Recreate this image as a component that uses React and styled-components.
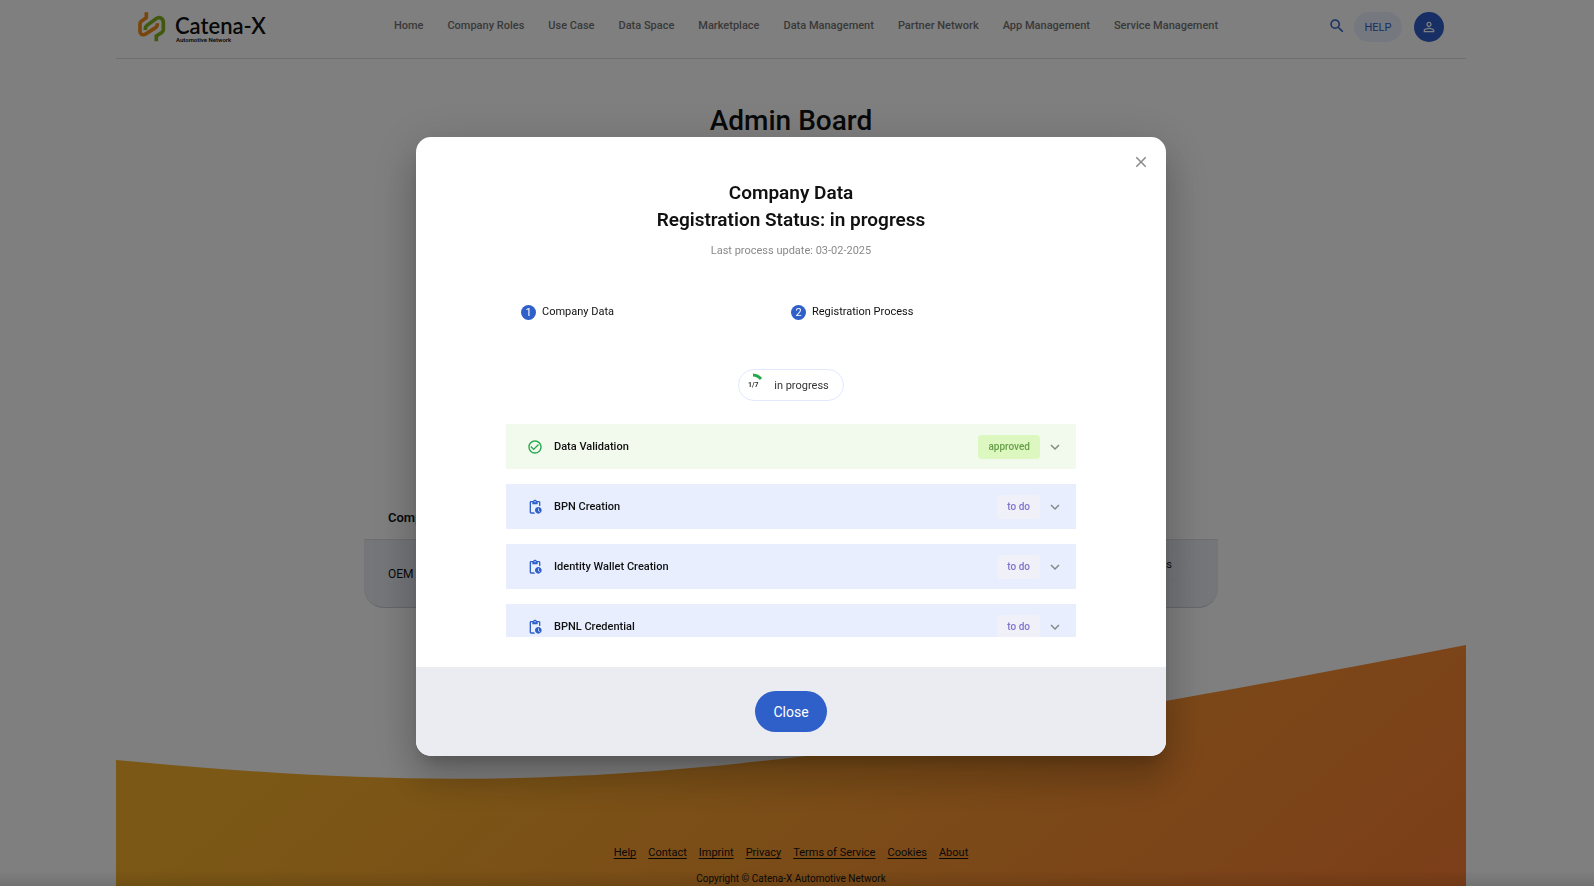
import React from "react";
import styled, { createGlobalStyle } from "styled-components";
import {
  MdSearch,
  MdPersonOutline,
  MdClose,
  MdExpandMore,
  MdCheckCircleOutline,
  MdPendingActions,
} from "react-icons/md";

const GlobalStyle = createGlobalStyle`
  *, *::before, *::after { box-sizing: border-box; }
  html, body { margin: 0; }
  body {
    height: 100vh;
    overflow: hidden;
    background: #fff;
    color: #111;
    font-family: Roboto, "Liberation Sans", sans-serif;
    font-size: 11px;
  }
  button { font-family: inherit; cursor: pointer; }
`;

const Page = styled.div`
  display: flex;
  flex-direction: column;
  width: calc(100% - 12px);
  min-height: 100vh;
  padding: 0 116px;
`;

const Header = styled.header`
  display: flex;
  justify-content: space-between;
  align-items: flex-start;
  height: 59px;
  padding: 12px 22px 0;
  border-bottom: 1px solid #dcdcdc;
`;

const Logo = styled.a`
  display: flex;
  gap: 9px;
  width: 146px;
  color: #111;
  text-decoration: none;
`;

const LogoText = styled.span`
  display: flex;
  flex-direction: column;
  padding-top: 4px;
`;

const LogoName = styled.span`
  font-family: Lato, sans-serif;
  font-size: 22px;
  font-weight: 600;
  line-height: 20px;
`;

const LogoTagline = styled.span`
  padding-left: 1px;
  font-size: 6px;
  font-weight: 600;
  line-height: 8px;
`;

const Nav = styled.nav`
  display: flex;
  gap: 24px;
  padding-left: 30px;
`;

const NavLink = styled.a`
  color: #737373;
  font-weight: 500;
  line-height: 28px;
  text-decoration: none;
  white-space: nowrap;
`;

const Tools = styled.div`
  display: flex;
  align-items: center;
  justify-content: flex-end;
  width: 146px;
`;

const SearchButton = styled.button`
  display: flex;
  padding: 0;
  margin: 0 8px 2px 0;
  border: 0;
  background: none;
  color: #2f5fc9;
  font-size: 18px;
`;

const HelpButton = styled.button`
  width: 48px;
  height: 30px;
  padding: 0;
  margin-right: 12px;
  border: 0;
  border-radius: 15px;
  background: #eaf1fe;
  color: #2f5fc9;
  font-size: 11px;
`;

const UserButton = styled.button`
  display: grid;
  place-items: center;
  width: 30px;
  height: 30px;
  padding: 0;
  border: 0;
  border-radius: 50%;
  background: #2f5fc9;
  color: #fff;
  font-size: 16px;
`;

const PageTitle = styled.h1`
  margin: 43px 0 0;
  font-size: 28px;
  font-weight: 500;
  line-height: 38px;
  text-align: center;
`;

const CompanyTable = styled.table`
  width: 854px;
  max-width: 100%;
  margin: 357px auto 0;
  border-spacing: 0;
  font-size: 12px;
`;

const HeadCell = styled.th`
  height: 43px;
  padding: 0 24px 2px;
  border-bottom: 1px solid #dcdcdc;
  font-size: 13px;
  font-weight: 600;
  text-align: left;
`;

const Cell = styled.td`
  height: 68px;
  padding: 0 24px;
  border-bottom: 1px solid #c8cdd8;
  background: #eaecf4;
  &:first-child { border-bottom-left-radius: 20px; }
  &:last-child { width: 220px; padding: 0 31px 18px 0; border-bottom-right-radius: 20px; text-align: right; }
`;

const StatusTag = styled.span`
  display: inline-flex;
  align-items: center;
  height: 32px;
  padding: 0 14px;
  border: 1px solid #e6ebf8;
  border-radius: 16px;
  font-size: 11px;
`;

const Footer = styled.footer`
  position: relative;
  display: flex;
  flex-direction: column;
  justify-content: flex-end;
  align-items: center;
  flex: 0 0 241px;
  margin-top: 37px;
`;

const Wave = styled.svg`
  position: absolute;
  inset: 0;
  width: 100%;
  height: 100%;
`;

const FooterLinks = styled.nav`
  position: relative;
  display: flex;
  gap: 12px;
`;

const FooterLink = styled.a`
  color: #111;
  line-height: 20px;
  text-underline-offset: 2px;
`;

const Copyright = styled.p`
  position: relative;
  margin: 8px 0 0;
  font-size: 10px;
  line-height: 15px;
`;

const Backdrop = styled.div`
  position: fixed;
  inset: 0;
  display: flex;
  justify-content: center;
  align-items: center;
  padding: 7px 12px 0 0;
  background:
    linear-gradient(to top, rgba(0, 0, 0, 0.1), transparent 16px),
    rgba(0, 0, 0, 0.5);
`;

const Dialog = styled.section`
  position: relative;
  display: flex;
  flex-direction: column;
  width: 750px;
  max-width: 100%;
  overflow: hidden;
  border-radius: 15px;
  background: #fff;
  box-shadow:
    0 11px 15px -7px rgba(0, 0, 0, 0.2),
    0 24px 38px 3px rgba(0, 0, 0, 0.14),
    0 9px 46px 8px rgba(0, 0, 0, 0.12);
`;

const CloseIcon = styled.button`
  position: absolute;
  top: 16px;
  right: 16px;
  display: flex;
  padding: 0;
  border: 0;
  background: none;
  color: #8a8a8a;
  font-size: 18px;
`;

const DialogHead = styled.header`
  padding: 42px 90px 0;
  text-align: center;
`;

const DialogTitle = styled.h2`
  margin: 0;
  font-size: 19px;
  font-weight: 600;
  line-height: 27px;
`;

const DialogNote = styled.p`
  margin: 8px 0 0;
  color: #8a8a8a;
  line-height: 20px;
`;

const DialogBody = styled.div`
  max-height: 376px;
  padding: 0 90px;
  margin-bottom: 30px;
  overflow: hidden;
`;

const Steps = styled.ol`
  display: grid;
  grid-template-columns: 1fr 1fr;
  padding: 0 15px;
  margin: 42px 0 48px;
  list-style: none;
`;

const Step = styled.li`
  display: flex;
  align-items: center;
  gap: 6px;
  height: 18px;
`;

const StepNumber = styled.span`
  display: grid;
  place-items: center;
  width: 15px;
  height: 15px;
  border-radius: 50%;
  background: #2f5fc9;
  color: #fff;
`;

const StepName = styled.span`
  padding-bottom: 2px;
`;

const Progress = styled.div`
  display: flex;
  align-items: center;
  gap: 11px;
  width: max-content;
  height: 32px;
  padding: 0 14px 0 4px;
  margin: 0 auto 23px;
  border: 1px solid #e2e9ff;
  border-radius: 16px;
  color: #333;
  line-height: 15px;
`;

const Dial = styled.span`
  position: relative;
  display: grid;
  place-items: center;
  width: 20px;
  height: 20px;
  font-size: 7px;
  font-weight: 700;
`;

const DialArc = styled.svg`
  position: absolute;
  inset: 0;
  overflow: visible;
`;

const Checklist = styled.ul`
  display: flex;
  flex-direction: column;
  gap: 15px;
  padding: 0;
  margin: 0;
  list-style: none;
`;

const CheckItem = styled.li`
  display: flex;
  align-items: center;
  height: 45px;
  padding: 0 12px 0 21px;
  background: ${({ $done }) => ($done ? "#f2f9ed" : "#e8eefe")};
`;

const ItemIcon = styled.span`
  display: flex;
  color: ${({ $done }) => ($done ? "#23a84c" : "#2f5fc9")};
  font-size: 16px;
`;

const ItemName = styled.span`
  flex: 1;
  padding-left: 11px;
  font-weight: 500;
`;

const Badge = styled.span`
  padding: 0 10px;
  border-radius: 4px;
  background: ${({ $done }) => ($done ? "#ddf7c0" : "#f0f0f9")};
  color: ${({ $done }) => ($done ? "#679f48" : "#8073cc")};
  font-size: 10px;
  font-weight: 500;
  line-height: 24px;
`;

const Expand = styled.button`
  display: flex;
  padding: 0;
  margin-left: 6px;
  border: 0;
  background: none;
  color: #888;
  font-size: 18px;
`;

const DialogFoot = styled.footer`
  display: flex;
  justify-content: center;
  align-items: center;
  height: 89px;
  background: #ebecf2;
`;

const CloseButton = styled.button`
  height: 41px;
  padding: 0 18px;
  border: 0;
  border-radius: 21px;
  background: #2f5fc9;
  color: #fff;
  font-size: 14px;
`;

const NAV = [
  "Home",
  "Company Roles",
  "Use Case",
  "Data Space",
  "Marketplace",
  "Data Management",
  "Partner Network",
  "App Management",
  "Service Management",
];

const FOOTER = ["Help", "Contact", "Imprint", "Privacy", "Terms of Service", "Cookies", "About"];

const CHECKS = [
  { name: "Data Validation", done: true },
  { name: "BPN Creation" },
  { name: "Identity Wallet Creation" },
  { name: "BPNL Credential" },
];

function LogoMark() {
  return (
    <svg width="28" height="30" viewBox="0 0 84 90" fill="none" strokeWidth="11" aria-hidden="true">
      <path d="M25 1V17L10 28Q6 31 6 36V58Q6 64 11 67Q17 70 23 66L53 47Q58 44 58 37V34" stroke="#f08c1a" />
      <path d="M22 54V49Q22 44 27 40L53 21Q61 15 68 18Q76 22 76 31V53Q76 59 71 62L55 72V88" stroke="#86b01e" />
    </svg>
  );
}

export default function App() {
  return (
    <>
      <GlobalStyle />
      <Page>
        <Header>
          <Logo href="#">
            <LogoMark />
            <LogoText>
              <LogoName>Catena-X</LogoName>
              <LogoTagline>Automotive Network</LogoTagline>
            </LogoText>
          </Logo>
          <Nav>
            {NAV.map((label) => (
              <NavLink href="#" key={label}>{label}</NavLink>
            ))}
          </Nav>
          <Tools>
            <SearchButton aria-label="Search"><MdSearch /></SearchButton>
            <HelpButton>HELP</HelpButton>
            <UserButton aria-label="Account"><MdPersonOutline /></UserButton>
          </Tools>
        </Header>

        <PageTitle>Admin Board</PageTitle>

        <CompanyTable>
          <thead>
            <tr>
              <HeadCell>Company</HeadCell>
              <HeadCell />
            </tr>
          </thead>
          <tbody>
            <tr>
              <Cell>OEM</Cell>
              <Cell><StatusTag>in progress</StatusTag></Cell>
            </tr>
          </tbody>
        </CompanyTable>

        <Footer>
          <Wave viewBox="0 0 1350 241" preserveAspectRatio="none" aria-hidden="true">
            <defs>
              <linearGradient id="amber" gradientUnits="userSpaceOnUse" x1="300" y1="0" x2="900" y2="700">
                <stop offset="0" stopColor="#f6b02c" />
                <stop offset="1" stopColor="#f97a34" />
              </linearGradient>
            </defs>
            <path d="M0 115C400 152 610 144 1350 0V241H0Z" fill="url(#amber)" />
          </Wave>
          <FooterLinks>
            {FOOTER.map((label) => (
              <FooterLink href="#" key={label}>{label}</FooterLink>
            ))}
          </FooterLinks>
          <Copyright>Copyright © Catena-X Automotive Network</Copyright>
        </Footer>
      </Page>

      <Backdrop>
        <Dialog role="dialog" aria-modal="true" aria-labelledby="dialog-title">
          <CloseIcon aria-label="Close dialog"><MdClose /></CloseIcon>
          <DialogHead>
            <DialogTitle id="dialog-title">
              Company Data
              <br />
              Registration Status: in progress
            </DialogTitle>
            <DialogNote>Last process update: 03-02-2025</DialogNote>
          </DialogHead>
          <DialogBody>
            <Steps>
              <Step>
                <StepNumber>1</StepNumber>
                <StepName>Company Data</StepName>
              </Step>
              <Step>
                <StepNumber>2</StepNumber>
                <StepName>Registration Process</StepName>
              </Step>
            </Steps>
            <Progress>
              <Dial>
                <DialArc viewBox="0 0 20 20" fill="none" aria-hidden="true">
                  <path d="M10 0A11 11 0 0 1 18 4" stroke="#23a84c" strokeWidth="3" />
                </DialArc>
                1/7
              </Dial>
              in progress
            </Progress>
            <Checklist>
              {CHECKS.map(({ name, done }) => (
                <CheckItem $done={done} key={name}>
                  <ItemIcon $done={done}>
                    {done ? <MdCheckCircleOutline /> : <MdPendingActions />}
                  </ItemIcon>
                  <ItemName>{name}</ItemName>
                  <Badge $done={done}>{done ? "approved" : "to do"}</Badge>
                  <Expand aria-label={`Expand ${name}`}><MdExpandMore /></Expand>
                </CheckItem>
              ))}
            </Checklist>
          </DialogBody>
          <DialogFoot>
            <CloseButton>Close</CloseButton>
          </DialogFoot>
        </Dialog>
      </Backdrop>
    </>
  );
}
